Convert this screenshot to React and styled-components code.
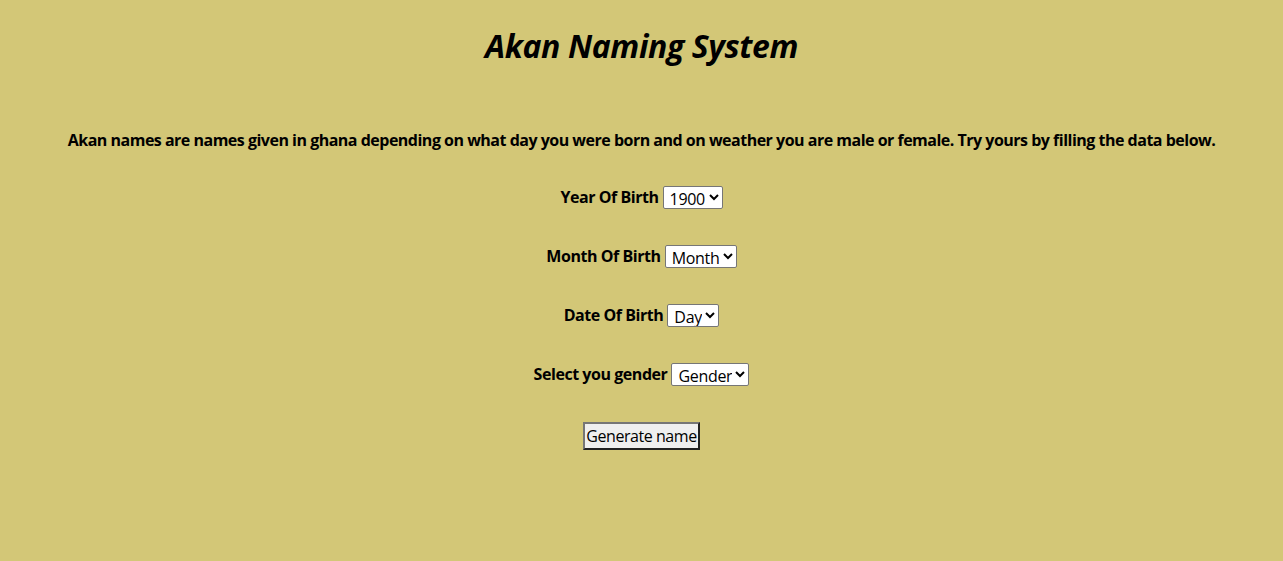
import React from 'react'
import styled, { createGlobalStyle } from 'styled-components'

const GlobalStyle = createGlobalStyle`
    html, body {
        margin: 0;
        padding: 0;
        background: #d3c777;
    }
    body {
        font-family: "Open Sans", "Noto Sans", sans-serif;
        color: #000;
        letter-spacing: -0.45px;
    }
`;

const Page = styled.div`
    min-height: 561px;
    display: flex;
    flex-direction: column;
    align-items: center;
    text-align: center;
`;
const Title = styled.h1`
    margin: 27px 0 0;
    font-size: 32px;
    line-height: 37px;
    font-style: italic;
    font-weight: 700;
    letter-spacing: -0.4px;
`;
const Intro = styled.p`
    margin: 66px 0 0;
    font-size: 16px;
    line-height: 20px;
    font-weight: 700;
    letter-spacing: -0.5px;
`;
const Form = styled.form`
    margin-top: 35px;
    display: flex;
    flex-direction: column;
    align-items: center;
    gap: 35px;
`;
const Row = styled.div`
    height: 24px;
    display: flex;
    align-items: center;
    gap: 4px;
`;
const Label = styled.label`
    font-size: 16px;
    font-weight: 700;
`;
const Select = styled.select`
    font-family: inherit;
    font-size: 16px;
    letter-spacing: -0.3px;
    height: 23px;
    padding: 0 0 0 2px;
    background: #fff;
    color: #000;
    border: 1px solid #767676;
    border-radius: 2px;
`;
const Button = styled.button`
    margin-top: 1px;
    font-family: inherit;
    font-size: 16px;
    letter-spacing: -0.45px;
    height: 28px;
    padding: 0 1px 1px;
    background: #efefef;
    color: #000;
    border: 2px outset #767676;
    border-radius: 0;
`;

const range = (a, b) => Array.from({ length: b - a + 1 }, (_, i) => String(a + i));

const fields = [
    { id: 'year', label: 'Year Of Birth', options: range(1900, 1999) },
    { id: 'month', label: 'Month Of Birth', options: ['Month', ...range(1, 12)] },
    { id: 'day', label: 'Date Of Birth', options: ['Day', ...range(1, 31)] },
    { id: 'gender', label: 'Select you gender', options: ['Gender', 'Male', 'Female'] },
];

const App = () => {
    return (
        <Page>
            <GlobalStyle />
            <Title>Akan Naming System</Title>
            <Intro>Akan names are names given in ghana depending on what day you were born and on weather you are male or female. Try yours by filling the data below.</Intro>
            <Form onSubmit={(e) => e.preventDefault()}>
                {fields.map((f) => (
                    <Row key={f.id}>
                        <Label htmlFor={f.id}>{f.label}</Label>
                        <Select id={f.id} defaultValue={f.options[0]}>
                            {f.options.map((o) => <option key={o}>{o}</option>)}
                        </Select>
                    </Row>
                ))}
                <Button type="button">Generate name</Button>
            </Form>
        </Page>
    )
}

export default App
